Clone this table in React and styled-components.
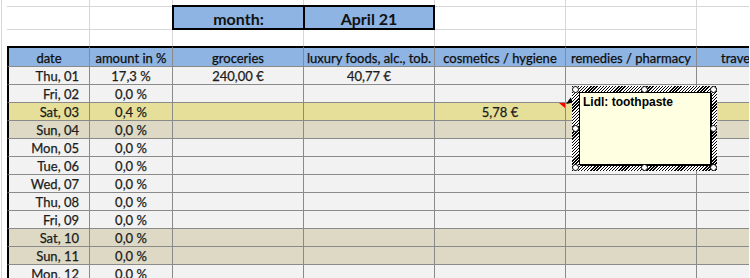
import styled, { createGlobalStyle } from "styled-components";

const COLS = "5px 83px 83px 131px 131px 131px 131px 131px";
const GRID = "#d6d6d6";
const LINE = "#8a8a8a";

const GlobalStyle = createGlobalStyle`
  body {
    margin: 0;
    background: #fff;
    font-family: Lato, "Liberation Sans", sans-serif;
  }
  * { box-sizing: border-box; }
`;

const Sheet = styled.div`
  position: relative;
  width: 748px;
  height: 278px;
  margin-left: 1px;
  border-left: 1px solid ${GRID};
  overflow: hidden;
`;

const Row = styled.div`
  display: grid;
  grid-template-columns: ${COLS};
`;

const Blank = styled.div`
  height: ${(p) => p.$h}px;
  background: #fff;
`;

const GridCell = styled.div`
  height: ${(p) => p.$h}px;
  border-right: 1px solid ${GRID};
  border-bottom: ${(p) => (p.$bottom ? `1px solid ${GRID}` : "none")};
`;

const MonthBox = styled.div`
  grid-column: span 2;
  margin: -2px 0 0 -1px;
  display: grid;
  grid-template-columns: 129px 1fr;
  border: 2px solid #000;
  background: #8db4e2;
  font-weight: 700;
  font-size: 16px;
  color: #111;
`;

const MonthCell = styled.div`
  display: flex;
  align-items: center;
  justify-content: center;
  padding-top: 1px;
  border-left: ${(p) => (p.$divider ? "2px solid #000" : "none")};
`;

const HeadCell = styled.div`
  height: 21px;
  display: flex;
  align-items: center;
  justify-content: center;
  padding-top: 1px;
  background: #8db4e2;
  border-top: 2px solid #000;
  border-right: 1px solid ${LINE};
  border-bottom: 1px solid ${LINE};
  border-left: ${(p) => (p.$first ? "2px solid #000" : "none")};
  font-size: 13px;
  color: #0d0d0d;
  -webkit-text-stroke: 0.25px #0d0d0d;
  white-space: nowrap;
`;

const Cell = styled.div`
  position: relative;
  height: 18px;
  display: flex;
  align-items: center;
  justify-content: ${(p) => (p.$right ? "flex-end" : "center")};
  padding-right: ${(p) => (p.$right ? "10px" : "0")};
  background: ${(p) => p.$bg};
  border-right: 1px solid ${LINE};
  border-bottom: 1px solid ${LINE};
  border-left: ${(p) => (p.$first ? "2px solid #000" : "none")};
  font-size: 13px;
  color: #1c1c1c;
  -webkit-text-stroke: 0.25px #1c1c1c;
  white-space: nowrap;

  ${(p) =>
    p.$note &&
    `
    &::after {
      content: "";
      position: absolute;
      top: 0;
      right: 0;
      border-top: 5px solid #ff0000;
      border-left: 6px solid transparent;
    }
  `}
`;

const Frame = styled.div`
  position: absolute;
  left: 570px;
  top: 86px;
  width: 145px;
  height: 85px;
  padding: 6px 6px 6px 7px;
  display: flex;
  background: repeating-linear-gradient(135deg, #000 0 1px, #fff 1px 2.2px);
`;

const Note = styled.div`
  flex: 1;
  background: #ffffe1;
  border: 1px solid #000;
  box-shadow: 1px 1px 0 #000;
  padding: 2px 3px;
  font-family: "Liberation Sans", Arial, sans-serif;
  font-weight: 700;
  font-size: 12px;
  color: #000;
`;

const Handle = styled.span`
  position: absolute;
  width: 7px;
  height: 7px;
  border-radius: 50%;
  background: #fff;
  border: 1px solid #000;
  left: ${(p) => p.$x}px;
  top: ${(p) => p.$y}px;
`;

const Arrow = styled.svg`
  position: absolute;
  left: 561px;
  top: 93px;
`;

const headers = [
  "date",
  "amount in %",
  "groceries",
  "luxury foods, alc., tob.",
  "cosmetics / hygiene",
  "remedies / pharmacy",
  "travel / leisure",
];

const PLAIN = "#f2f2f2";
const YELLOW = "#e5df99";
const BEIGE = "#ddd9c4";

const days = [
  { d: "Thu, 01", p: "17,3 %", v: ["240,00 €", "40,77 €", "", "", ""] },
  { d: "Fri, 02", p: "0,0 %" },
  { d: "Sat, 03", p: "0,4 %", bg: YELLOW, v: ["", "", "5,78 €", "", ""], note: 2 },
  { d: "Sun, 04", p: "0,0 %", bg: BEIGE },
  { d: "Mon, 05", p: "0,0 %" },
  { d: "Tue, 06", p: "0,0 %" },
  { d: "Wed, 07", p: "0,0 %" },
  { d: "Thu, 08", p: "0,0 %" },
  { d: "Fri, 09", p: "0,0 %" },
  { d: "Sat, 10", p: "0,0 %", bg: BEIGE },
  { d: "Sun, 11", p: "0,0 %", bg: BEIGE },
  { d: "Mon, 12", p: "0,0 %" },
];

const handles = [
  [0, 0], [69, 0], [138, 0],
  [0, 39], [138, 39],
  [0, 78], [69, 78], [138, 78],
];

const App = () => {
  return (
    <>
      <GlobalStyle />
      <Sheet>
        <Row>
          <Blank $h={7} />
          {headers.map((h) => (
            <GridCell key={h} $h={7} $bottom />
          ))}
        </Row>
        <Row>
          <Blank $h={23} />
          <GridCell $h={23} $bottom />
          <GridCell $h={23} $bottom />
          <MonthBox>
            <MonthCell>month:</MonthCell>
            <MonthCell $divider>April 21</MonthCell>
          </MonthBox>
          <GridCell $h={23} $bottom />
          <GridCell $h={23} $bottom />
        </Row>
        <Row>
          <Blank $h={16} />
          {headers.map((h) => (
            <GridCell key={h} $h={16} />
          ))}
        </Row>
        <Row>
          <Blank $h={21} />
          {headers.map((h, i) => (
            <HeadCell key={h} $first={i === 0}>
              {h}
            </HeadCell>
          ))}
        </Row>
        {days.map((day) => {
          const bg = day.bg || PLAIN;
          const values = day.v || ["", "", "", "", ""];
          return (
            <Row key={day.d}>
              <Blank $h={18} />
              <Cell $first $right $bg={bg}>
                {day.d}
              </Cell>
              <Cell $bg={bg}>{day.p}</Cell>
              {values.map((v, i) => (
                <Cell key={i} $bg={bg} $note={day.note === i}>
                  {v}
                </Cell>
              ))}
            </Row>
          );
        })}

        <Arrow width="20" height="14" viewBox="0 0 20 14">
          <line x1="6" y1="9" x2="18" y2="2" stroke="#000" strokeWidth="1.2" />
          <polygon points="3,11 10.5,9.6 7.6,4.6" fill="#000" />
        </Arrow>
        <Frame>
          {handles.map(([x, y], i) => (
            <Handle key={i} $x={x} $y={y} />
          ))}
          <Note>Lidl: toothpaste</Note>
        </Frame>
      </Sheet>
    </>
  );
};

export default App;
